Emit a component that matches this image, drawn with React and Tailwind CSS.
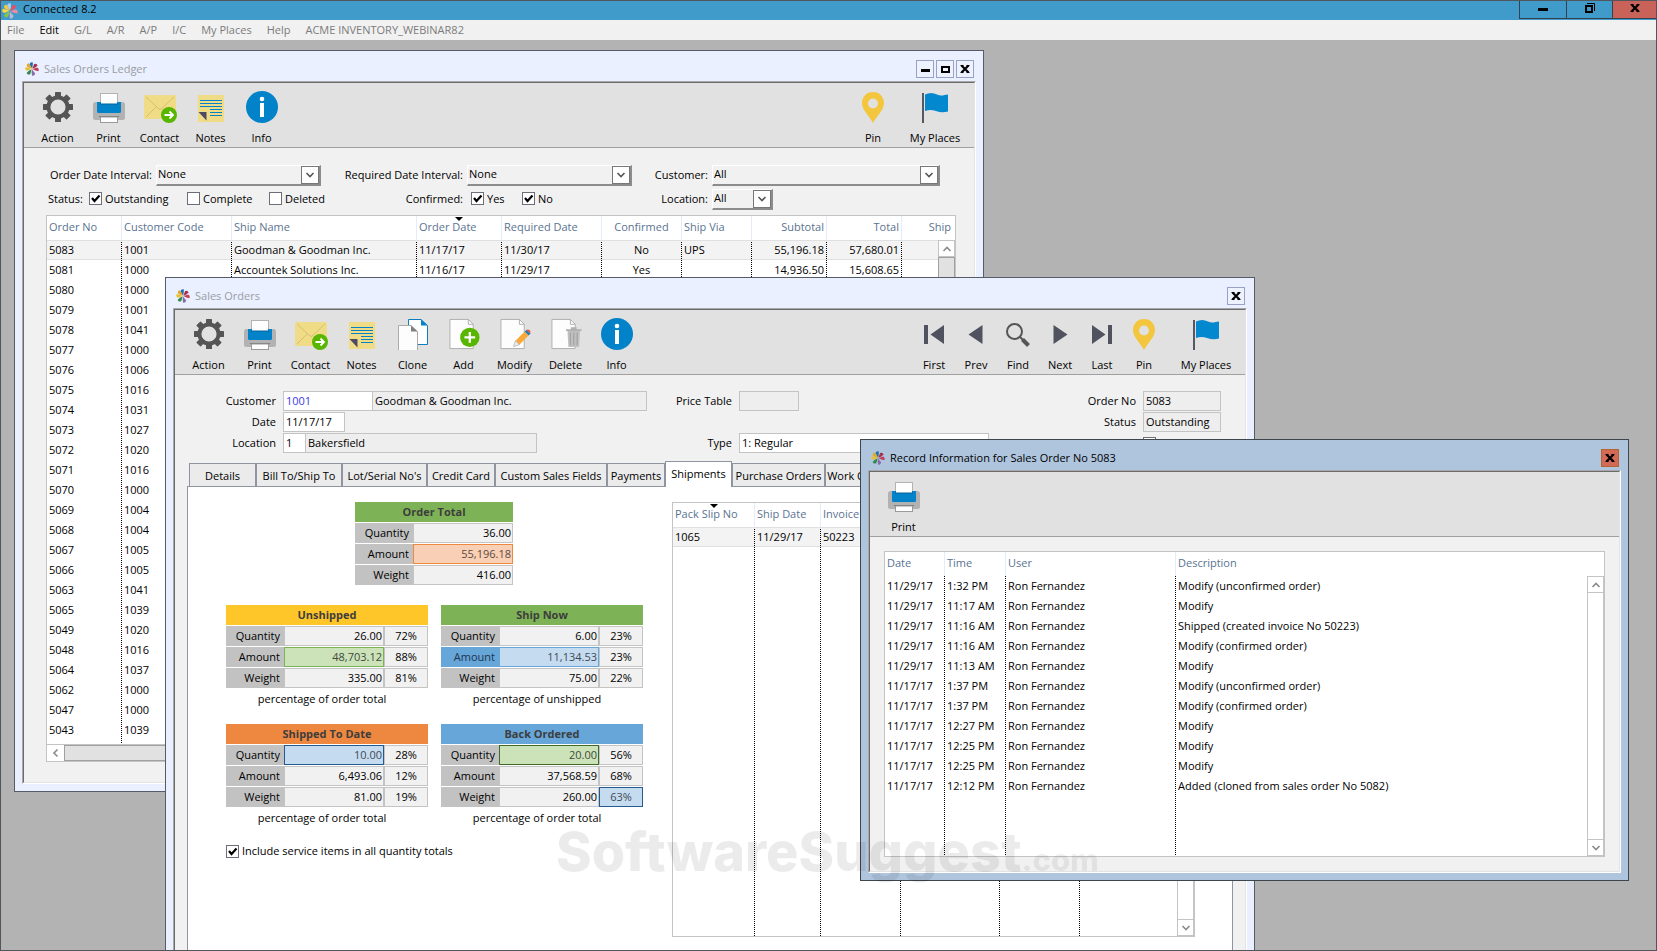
import React from 'react';

const ledgerColumns = [
  { key: 'no', label: 'Order No', width: 'w-[74px]' },
  { key: 'code', label: 'Customer Code', width: 'w-[110px]' },
  { key: 'name', label: 'Ship Name', width: 'w-[185px]' },
  { key: 'date', label: 'Order Date', width: 'w-[85px]', sorted: true },
  { key: 'required', label: 'Required Date', width: 'w-[100px]' },
  { key: 'confirmed', label: 'Confirmed', width: 'w-[80px]', align: 'text-center' },
  { key: 'via', label: 'Ship Via', width: 'w-[70px]' },
  { key: 'subtotal', label: 'Subtotal', width: 'w-[75px]', align: 'text-right' },
  { key: 'total', label: 'Total', width: 'w-[75px]', align: 'text-right' },
  { key: 'ship', label: 'Ship', width: '', align: 'text-right' },
];

const ledgerRows = [
  { no: '5083', code: '1001', name: 'Goodman & Goodman Inc.', date: '11/17/17', required: '11/30/17', confirmed: 'No', via: 'UPS', subtotal: '55,196.18', total: '57,680.01' },
  { no: '5081', code: '1000', name: 'Accountek Solutions Inc.', date: '11/16/17', required: '11/29/17', confirmed: 'Yes', subtotal: '14,936.50', total: '15,608.65' },
  { no: '5080', code: '1000' },
  { no: '5079', code: '1001' },
  { no: '5078', code: '1041' },
  { no: '5077', code: '1000' },
  { no: '5076', code: '1006' },
  { no: '5075', code: '1016' },
  { no: '5074', code: '1031' },
  { no: '5073', code: '1027' },
  { no: '5072', code: '1020' },
  { no: '5071', code: '1016' },
  { no: '5070', code: '1000' },
  { no: '5069', code: '1004' },
  { no: '5068', code: '1004' },
  { no: '5067', code: '1005' },
  { no: '5066', code: '1005' },
  { no: '5063', code: '1041' },
  { no: '5065', code: '1039' },
  { no: '5049', code: '1020' },
  { no: '5048', code: '1016' },
  { no: '5064', code: '1037' },
  { no: '5062', code: '1000' },
  { no: '5047', code: '1000' },
  { no: '5043', code: '1039' },
];

const shipmentColumns = [
  { key: 'slip', label: 'Pack Slip No', width: 'w-[81px]', sorted: true },
  { key: 'date', label: 'Ship Date', width: 'w-[66px]' },
  { key: 'invoice', label: 'Invoice', width: 'w-[80px]' },
  { key: 'c4', label: '', width: 'w-[99px]' },
  { key: 'c5', label: '', width: 'w-[80px]' },
  { key: 'c6', label: '', width: '' },
];

const shipmentRows = [{ slip: '1065', date: '11/29/17', invoice: '50223' }];

const recordColumns = [
  { key: 'date', label: 'Date', width: 'w-[59px]' },
  { key: 'time', label: 'Time', width: 'w-[61px]' },
  { key: 'user', label: 'User', width: 'w-[170px]' },
  { key: 'text', label: 'Description', width: '' },
];

const recordRows = [
  ['11/29/17', '1:32 PM', 'Modify (unconfirmed order)'],
  ['11/29/17', '11:17 AM', 'Modify'],
  ['11/29/17', '11:16 AM', 'Shipped (created invoice No 50223)'],
  ['11/29/17', '11:16 AM', 'Modify (confirmed order)'],
  ['11/29/17', '11:13 AM', 'Modify'],
  ['11/17/17', '1:37 PM', 'Modify (unconfirmed order)'],
  ['11/17/17', '1:37 PM', 'Modify (confirmed order)'],
  ['11/17/17', '12:27 PM', 'Modify'],
  ['11/17/17', '12:25 PM', 'Modify'],
  ['11/17/17', '12:25 PM', 'Modify'],
  ['11/17/17', '12:12 PM', 'Added (cloned from sales order No 5082)'],
].map(([date, time, text]) => ({ date, time, user: 'Ron Fernandez', text }));

/* ---------- icons ---------- */

function Logo({ className = 'size-[14px]', light }) {
  const colors = light
    ? ['#a9d0f0', '#e8506a', '#f08aa0', '#b9b4dc', '#8cc63f', '#f6d94a', '#f3c63c']
    : ['#1f6fb5', '#a8304a', '#c2405a', '#8a6bb0', '#2f8a4a', '#e8c02f', '#e0a92a'];
  return (
    <svg viewBox="0 0 16 16" className={className} aria-hidden="true">
      {[-8, 44, 95, 165, 220, 272, 315].map((angle, i) => (
        <path key={angle} d="M8 7.500L5.800 2.200Q7.200-.6 9.800.6 10 4 8 7.500Z" fill={colors[i]} transform={`rotate(${angle} 8 8)`} />
      ))}
    </svg>
  );
}

function GearIcon() {
  return (
    <svg viewBox="0 0 32 32" className="size-8" aria-hidden="true">
      <g fill="#555">
        {[0, 45, 90, 135, 180, 225, 270, 315].map((a) => (
          <rect key={a} x="13" y="1" width="6" height="7" rx=".6" transform={`rotate(${a} 16 16)`} />
        ))}
      </g>
      <circle cx="16" cy="16" r="9.6" fill="none" stroke="#555" strokeWidth="4" />
    </svg>
  );
}

function PrintIcon() {
  return (
    <svg viewBox="0 0 32 32" className="size-8" aria-hidden="true">
      <rect x="0" y="11" width="32" height="18" rx="2.5" fill="#b2b2b2" />
      <rect x="7.5" y="2.5" width="17" height="12" fill="#fdfdfd" stroke="#b2b2b2" />
      <path d="M4 11h4v2h16v-2h4v9.500a1.500 1.500 0 0 1-1.500 1.500h-21a1.500 1.500 0 0 1-1.500-1.500z" fill="#0282c8" />
      <path d="M7 13h18" stroke="#046398" strokeWidth="1" />
      <path d="M6 25.500h20" stroke="#777" strokeWidth="1" />
      <rect x="7.500" y="26" width="17" height="5.500" fill="#fdfdfd" stroke="#999" />
    </svg>
  );
}

function ContactIcon() {
  return (
    <svg viewBox="0 0 34 32" className="h-8 w-[34px]" aria-hidden="true">
      <rect x="1" y="4" width="32" height="24" rx="1.500" fill="#f0dc86" />
      <path d="M3 6l13 12q1 1 2 0L31 6M3 26l10-10" fill="none" stroke="#d3c075" strokeWidth="1" />
      <circle cx="26" cy="24" r="8" fill="#58b500" />
      <path d="M21.500 24h8M26.500 20.500l3.500 3.500-3.500 3.500" fill="none" stroke="#fff" strokeWidth="1.800" />
    </svg>
  );
}

function NotesIcon() {
  return (
    <svg viewBox="0 0 32 32" className="size-8" aria-hidden="true">
      <path d="M3 4h26v27H3z" fill="#f0dc86" />
      <path d="M3.500 21h8v8.500z" fill="#4f4a63" />
      <path d="M5 9.500h22M5 12.500h22M5 15.500h22M15 18.500h12M15 21.500h12M15 24.500h12" stroke="#0282c8" strokeWidth="1" />
    </svg>
  );
}

function InfoIcon() {
  return (
    <svg viewBox="0 0 32 32" className="size-8" aria-hidden="true">
      <circle cx="16" cy="16" r="16" fill="#0282c8" />
      <circle cx="16" cy="8" r="2.300" fill="#fff" />
      <rect x="14" y="12" width="4" height="14" fill="#fff" />
    </svg>
  );
}

function CloneIcon() {
  return (
    <svg viewBox="0 0 32 32" className="size-8" aria-hidden="true">
      <path d="M11.500 1.500h12.500l6.500 6v19h-19z" fill="#fff" stroke="#0f7cc0" />
      <path d="M24 1.500v6h6.500z" fill="#0282c8" />
      <path d="M1.500 7.500h12.500l6.500 6v19h-19z" fill="#fdfdfd" stroke="#aaa" />
      <path d="M14 7.500v6h6.500z" fill="#808080" />
    </svg>
  );
}

function Sheet() {
  return (
    <>
      <path d="M2.500 1.500h19l5 5v25h-24z" fill="#fdfdfd" stroke="#b0b0b0" />
      <path d="M21.500 1.500v5h5z" fill="#fff" stroke="#b0b0b0" />
    </>
  );
}

function AddIcon() {
  return (
    <svg viewBox="0 0 34 33" className="h-8 w-[34px]" aria-hidden="true">
      <Sheet />
      <circle cx="23" cy="20" r="10" fill="#58b500" />
      <path d="M23 14.500v11M17.500 20h11" stroke="#fff" strokeWidth="2.400" />
    </svg>
  );
}

function ModifyIcon() {
  return (
    <svg viewBox="0 0 34 33" className="h-8 w-[34px]" aria-hidden="true">
      <Sheet />
      <path d="M27 14l4 4-9.500 9.500-4-4z" fill="#f9a93a" />
      <path d="M27 14l2-2 4 4-2 2z" fill="#1b7fc4" />
      <path d="M28.500 12.500q2-1.500 3.500 0t.800 3.500z" fill="#ee5a35" />
      <path d="M17.500 23.500l4 4-6 2z" fill="#eee" stroke="#999" strokeWidth=".6" />
    </svg>
  );
}

function DeleteIcon() {
  return (
    <svg viewBox="0 0 34 33" className="h-8 w-[34px]" aria-hidden="true">
      <Sheet />
      <path d="M18.500 13h13l-1 17h-11z" fill="#c0c0c0" />
      <path d="M17 12.500h16M22 10.500h6" stroke="#b0b0b0" strokeWidth="2" />
      <path d="M21.500 15v13M25 15v13M28.500 15v13" stroke="#a2a2a2" strokeWidth="1.200" />
    </svg>
  );
}

function PinIcon() {
  return (
    <svg viewBox="0 0 32 32" className="size-8" aria-hidden="true">
      <path fillRule="evenodd" d="M16 1C9.500 1 5 5.800 5 12c0 7 7 12.500 11 20 4-7.500 11-13 11-20C27 5.800 22.500 1 16 1zm0 6.500a5 5 0 1 1 0 10 5 5 0 0 1 0-10z" fill="#f4c63d" />
    </svg>
  );
}

function FlagIcon() {
  return (
    <svg viewBox="0 0 32 32" className="size-8" aria-hidden="true">
      <path d="M4 2v30" stroke="#555764" strokeWidth="2" />
      <path d="M6 3.500c4-2 8-2 12 0s7 .500 11 0v17c-4 1-8 1-12-.5s-7-1.500-11 0z" fill="#0288cf" />
    </svg>
  );
}

function FirstIcon() {
  return (
    <svg viewBox="0 0 32 32" className="size-8" aria-hidden="true">
      <path d="M6 7h4v19H6zM26 7v19L12.500 16.500z" fill="#50535f" />
    </svg>
  );
}
function PrevIcon() {
  return (
    <svg viewBox="0 0 32 32" className="size-8" aria-hidden="true">
      <path d="M22.500 7v19L8.500 16.500z" fill="#50535f" />
    </svg>
  );
}
function NextIcon() {
  return (
    <svg viewBox="0 0 32 32" className="size-8" aria-hidden="true">
      <path d="M9.500 7v19l14-9.500z" fill="#50535f" />
    </svg>
  );
}
function LastIcon() {
  return (
    <svg viewBox="0 0 32 32" className="size-8" aria-hidden="true">
      <path d="M22 7h4v19h-4zM6 7v19l13.500-9.500z" fill="#50535f" />
    </svg>
  );
}
function FindIcon() {
  return (
    <svg viewBox="0 0 32 32" className="size-8" aria-hidden="true">
      <circle cx="12.500" cy="13.500" r="7.500" fill="none" stroke="#555" strokeWidth="2" />
      <path d="M18 19l3 3" stroke="#555" strokeWidth="2" />
      <path d="M20.500 21.500l6 6" stroke="#555" strokeWidth="4" />
    </svg>
  );
}

function Chevron({ dir = 'down', className = 'text-[#8a8a90]' }) {
  const paths = { down: 'M1.500 3l3.500 3.500L8.500 3', up: 'M1.500 7L5 3.500 8.500 7', left: 'M6.500 1.500L3 5l3.500 3.500' };
  return (
    <svg viewBox="0 0 10 10" className={`size-[10px] ${className}`} aria-hidden="true">
      <path d={paths[dir]} fill="none" stroke="currentColor" strokeWidth="1.600" />
    </svg>
  );
}

/* ---------- window pieces ---------- */

function CloseGlyph() {
  return (
    <svg viewBox="0 0 10 10" className="size-[10px]" aria-hidden="true">
      <path d="M1.500 1.500l7 7M8.500 1.500l-7 7" stroke="#000" strokeWidth="2.200" />
      <path d="M.5 1.500h3M6.500 1.500h3M.5 8.500h3M6.500 8.500h3" stroke="#000" strokeWidth="1" />
    </svg>
  );
}

const frameButton = 'flex size-[18px] items-center justify-center border border-[#98a2c4] bg-[#eef2ff]';

function Win({ title, active, sizable, className, children }) {
  return (
    <section
      aria-label={title}
      className={`absolute isolate flex flex-col border ${active ? 'border-[#3f454d] bg-[#afc5de]' : 'border-[#555c66] bg-[#eaf0ff]'} ${className}`}
    >
      <header className="flex h-[30px] shrink-0 items-center gap-[5px] pl-[10px] pr-[9px] pt-[6px]">
        <Logo />
        <h2 className={active ? 'text-black' : 'text-[#9a9ca3]'}>{title}</h2>
        <div className="ml-auto flex gap-[2px]">
          {sizable && (
            <>
              <button aria-label="Minimize" className={frameButton}>
                <span className="mt-[3px] h-[3px] w-[9px] bg-black" />
              </button>
              <button aria-label="Maximize" className={frameButton}>
                <span className="h-[7px] w-[9px] border-2 border-black" />
              </button>
            </>
          )}
          <button
            aria-label="Close"
            className={active ? 'flex size-[18px] items-center justify-center border border-[#b5632f] bg-[#d36a56]' : frameButton}
          >
            <CloseGlyph />
          </button>
        </div>
      </header>
      <div className="mx-[7px] mb-[7px] flex min-h-0 flex-1 flex-col border border-b-white border-l-[#a8a8a8] border-r-white border-t-[#a8a8a8]">
        <div className="flex min-h-0 flex-1 flex-col border border-b-[#e3e3e3] border-l-[#6b6b6b] border-r-[#e3e3e3] border-t-[#6b6b6b] bg-[#f1f1f1]">
          {children}
        </div>
      </div>
    </section>
  );
}

function Toolbar({ children }) {
  return (
    <div className="flex h-[65px] shrink-0 border-b border-[#a0a0a0] bg-[#e1e1e1] pl-[8px] pr-[2px] pt-2">
      {children}
    </div>
  );
}

function Tool({ icon, label, className = 'w-[51px]' }) {
  return (
    <button className={`flex flex-col items-center gap-[7px] whitespace-nowrap ${className}`}>
      {icon}
      {label}
    </button>
  );
}

function PlacesTools() {
  return (
    <>
      <Tool icon={<PinIcon />} label="Pin" className="w-[42px]" />
      <Tool icon={<FlagIcon />} label="My Places" className="ml-1 w-[74px]" />
    </>
  );
}

function Check({ label, checked, className = '' }) {
  return (
    <label className={`flex items-center gap-[3px] whitespace-nowrap ${className}`}>
      <span className="relative size-[13px]">
        <input type="checkbox" defaultChecked={checked} className="peer block size-[13px] appearance-none border border-[#6e6e78] bg-white" />
        <svg viewBox="0 0 13 13" className="pointer-events-none absolute inset-0 hidden size-[13px] peer-checked:block" aria-hidden="true">
          <path d="M3 6l2.500 3L10.500 3.500" fill="none" stroke="#000" strokeWidth="2.200" />
        </svg>
      </span>
      {label}
    </label>
  );
}

function Picker({ id, label, value, labelClass, selectClass }) {
  return (
    <>
      <label htmlFor={id} className={`whitespace-nowrap pb-[2px] pr-1 text-right ${labelClass}`}>{label}</label>
      <div className={`relative h-[21px] border-b-2 border-l border-r-2 border-t border-b-[#8c8c8c] border-l-white border-r-[#8c8c8c] border-t-white ${selectClass}`}>
        <select id={id} className="block h-full w-full appearance-none bg-[#f1f1f1] pb-[2px] pl-px">
          <option>{value}</option>
        </select>
        <span className="pointer-events-none absolute inset-y-0 right-0 flex w-[18px] items-center justify-center border border-[#777] bg-white">
          <Chevron className="text-[#555]" />
        </span>
      </div>
    </>
  );
}

const scrollButton = 'flex size-[17px] shrink-0 items-center justify-center border border-[#c4c4c4] bg-white';

function ScrollBar({ thumb }) {
  return (
    <div className="absolute bottom-0 right-0 top-[24px] flex w-[17px] flex-col border-x border-[#c4c4c4] bg-white">
      <button aria-label="Scroll up" className={`-mx-px ${scrollButton}`}><Chevron dir="up" /></button>
      <div className="flex flex-1 flex-col">
        {thumb && <div className="-mx-px h-[200px] border border-[#a0a0a0] bg-[#e1e1e1]" />}
      </div>
      <button aria-label="Scroll down" className={`-mx-px ${scrollButton}`}><Chevron /></button>
    </div>
  );
}

// one black pixel on, one off, down the left edge of a cell
const dotted = 'bg-[linear-gradient(#000_50%,transparent_50%)] bg-[length:1px_2px] bg-left-top bg-repeat-y';

function Grid({ columns, rows, selected, filler }) {
  return (
    <table className="w-full table-fixed border-separate border-spacing-0">
      <thead>
        <tr className="h-[24px]">
          {columns.map((col, i) => (
            <th
              key={col.key}
              scope="col"
              className={`relative whitespace-nowrap p-0 pb-[3px] font-normal text-[#5a7391] ${i ? 'border-l border-[#e3ecf8]' : ''} ${col.key === 'ship' ? 'pr-[4px]' : 'px-[2px]'} ${col.align || 'text-left'} ${col.width}`}
            >
              {col.label}
              {col.sorted && (
                <svg viewBox="0 0 8 4" className="absolute inset-x-0 top-px mx-auto h-1 w-2" aria-hidden="true">
                  <path d="M0 0h8L4 4z" />
                </svg>
              )}
            </th>
          ))}
        </tr>
      </thead>
      <tbody>
        {rows.map((row, r) => (
          <tr key={r} className="h-[20px]">
            {columns.map((col, i) => (
              <td
                key={col.key}
                className={`whitespace-nowrap p-0 pr-[2px] ${i ? `pl-[3px] ${dotted}` : 'pl-[2px]'} ${col.align || ''} ${r === selected ? 'bg-[#f3f3f3] shadow-[inset_0_1px_#e0e0e0,inset_0_-1px_#e0e0e0]' : ''}`}
              >
                {row[col.key]}
              </td>
            ))}
          </tr>
        ))}
        {filler && (
          <tr className={filler} aria-hidden="true">
            {columns.map((col, i) => (
              <td key={col.key} className={i ? `p-0 ${dotted}` : 'p-0'} />
            ))}
          </tr>
        )}
      </tbody>
    </table>
  );
}

/* ---------- Sales Orders Ledger ---------- */

function LedgerWindow() {
  return (
    <Win title="Sales Orders Ledger" sizable className="left-[13px] top-[10px] h-[742px] w-[970px]">
      <Toolbar>
        <Tool icon={<GearIcon />} label="Action" />
        <Tool icon={<PrintIcon />} label="Print" />
        <Tool icon={<ContactIcon />} label="Contact" />
        <Tool icon={<NotesIcon />} label="Notes" />
        <Tool icon={<InfoIcon />} label="Info" />
        <div className="ml-auto flex"><PlacesTools /></div>
      </Toolbar>

      <div className="flex flex-col gap-[3px] pl-6 pt-[17px]">
        <div className="flex items-center">
          <Picker id="order-interval" label="Order Date Interval:" value="None" labelClass="w-[108px]" selectClass="w-[165px]" />
          <Picker id="required-interval" label="Required Date Interval:" value="None" labelClass="w-[146px]" selectClass="w-[165px]" />
          <Picker id="customer-filter" label="Customer:" value="All" labelClass="w-[80px]" selectClass="w-[228px]" />
        </div>
        <div className="flex items-center">
          <div className="flex pb-[2px]">
            <span className="w-[41px]">Status:</span>
            <Check label="Outstanding" checked className="w-[98px]" />
            <Check label="Complete" className="w-[82px]" />
            <Check label="Deleted" className="w-[82px]" />
            <span className="w-[120px] pr-[8px] text-right">Confirmed:</span>
            <Check label="Yes" checked className="w-[51px]" />
            <Check label="No" checked className="w-[51px]" />
          </div>
          <Picker id="location-filter" label="Location:" value="All" labelClass="w-[139px]" selectClass="w-[61px]" />
        </div>
      </div>

      <div className="ml-[22px] mr-[18px] mt-[5px] flex flex-col">
        <div className="relative h-[530px] border border-[#c4c4c4] bg-white">
          <Grid columns={ledgerColumns} rows={ledgerRows} selected={0} filler="h-[4px]" />
          <ScrollBar thumb />
        </div>
        <div className="flex h-[17px] border border-t-0 border-[#c4c4c4] bg-white">
          <button aria-label="Scroll left" className="flex w-[17px] items-center justify-center"><Chevron dir="left" /></button>
          <div className="w-[600px] border border-[#a0a0a0] bg-[#e1e1e1]" />
        </div>
      </div>
    </Win>
  );
}

/* ---------- Sales Orders ---------- */

const fieldBase = 'h-[20px] border border-[#c4c4c4] pb-[2px] pl-[2px]';

function Field({ label, value, labelClass, inputClass, extra }) {
  const id = `so-${label.toLowerCase().replace(/\s/g, '-')}`;
  return (
    <div className="flex items-center">
      <label htmlFor={id} className={`pr-[7px] text-right ${labelClass}`}>{label}</label>
      <input id={id} defaultValue={value} className={`${fieldBase} ${inputClass}`} />
      {extra}
    </div>
  );
}

const tones = {
  plain: 'border-[#c4c4c4] bg-[#f1f1f1] text-black',
  orange: 'border-[#ee8840] bg-[#f9d0b5] text-[#5c4a40]',
  green: 'border-[#7db356] bg-[#cce3ba] text-[#3f4a3a]',
  darkGreen: 'border-[#3f6b2a] bg-[#cce3ba] text-[#3f4a3a]',
  blue: 'border-[#66a6d8] bg-[#c5dcf0] text-[#3f4a55]',
  darkBlue: 'border-[#255a8e] bg-[#c5dcf0] text-[#3f4a55]',
};

function Totals({ title, head, rows, note }) {
  return (
    <div>
      <table className="border-separate border-spacing-0">
        <thead>
          <tr>
            <th colSpan={3} className={`h-[20px] p-0 font-bold text-[#3d3d3d] ${head}`}>{title}</th>
          </tr>
        </thead>
        <tbody>
          {rows.map(([label, value, pct, tone = 'plain', pctTone = 'plain', labelTone = 'bg-[#c2c2c2]']) => (
            <tr key={label}>
              <th scope="row" className="p-0 pt-px font-normal">
                <div className={`h-[20px] w-[58px] pr-1 text-right leading-[20px] ${labelTone}`}>{label}</div>
              </th>
              <td className="p-0 pt-px">
                <div className={`h-[20px] w-[100px] border pr-px text-right leading-[18px] ${tones[tone]}`}>{value}</div>
              </td>
              {pct && (
                <td className="p-0 pt-px">
                  <div className={`h-[20px] w-[44px] border text-center leading-[18px] ${tones[pctTone]}`}>{pct}</div>
                </td>
              )}
            </tr>
          ))}
        </tbody>
      </table>
      {note && <p className="w-[192px] text-center leading-[22px]">{note}</p>}
    </div>
  );
}

const tabs = [
  ['Details', 'w-[67px]'],
  ['Bill To/Ship To', 'w-[86px]'],
  ["Lot/Serial No's", 'w-[85px]'],
  ['Credit Card', 'w-[68px]'],
  ['Custom Sales Fields', 'w-[112px]'],
  ['Payments', 'w-[58px]'],
  ['Shipments', 'w-[67px]'],
  ['Purchase Orders', 'w-[93px]'],
  ['Work Orders', 'w-[70px]'],
];

function OrderWindow() {
  return (
    <Win title="Sales Orders" className="left-[164px] top-[237px] h-[700px] w-[1090px]">
      <Toolbar>
        <Tool icon={<GearIcon />} label="Action" />
        <Tool icon={<PrintIcon />} label="Print" />
        <Tool icon={<ContactIcon />} label="Contact" />
        <Tool icon={<NotesIcon />} label="Notes" />
        <Tool icon={<CloneIcon />} label="Clone" />
        <Tool icon={<AddIcon />} label="Add" />
        <Tool icon={<ModifyIcon />} label="Modify" />
        <Tool icon={<DeleteIcon />} label="Delete" />
        <Tool icon={<InfoIcon />} label="Info" />
        <div className="ml-auto flex">
          <Tool icon={<FirstIcon />} label="First" className="w-[42px]" />
          <Tool icon={<PrevIcon />} label="Prev" className="w-[42px]" />
          <Tool icon={<FindIcon />} label="Find" className="w-[42px]" />
          <Tool icon={<NextIcon />} label="Next" className="w-[42px]" />
          <Tool icon={<LastIcon />} label="Last" className="w-[42px]" />
          <PlacesTools />
        </div>
      </Toolbar>

      <div className="flex pr-6 pt-4">
        <div className="flex w-[472px] flex-col gap-px">
          <Field
            label="Customer"
            value="1001"
            labelClass="w-[108px]"
            inputClass="w-[90px] bg-white text-[#3a3ae8]"
            extra={<input aria-label="Customer name" defaultValue="Goodman & Goodman Inc." className={`${fieldBase} -ml-px w-[275px] bg-[#eee]`} />}
          />
          <Field label="Date" value="11/17/17" labelClass="w-[108px]" inputClass="w-[62px] bg-white" />
          <Field
            label="Location"
            value="1"
            labelClass="w-[108px]"
            inputClass="w-[23px] bg-white"
            extra={<input aria-label="Location name" defaultValue="Bakersfield" className={`${fieldBase} -ml-px w-[232px] bg-[#eee]`} />}
          />
        </div>
        <div className="flex flex-col justify-between">
          <Field label="Price Table" value="" labelClass="w-[92px]" inputClass="w-[60px] bg-[#eee]" />
          <Field label="Type" value="1: Regular" labelClass="w-[92px]" inputClass="w-[250px] bg-white" />
        </div>
        <div className="ml-auto flex flex-col gap-px">
          <Field label="Order No" value="5083" labelClass="w-[100px]" inputClass="w-[78px] bg-[#eee]" />
          <Field label="Status" value="Outstanding" labelClass="w-[100px]" inputClass="w-[78px] bg-[#eee]" />
          <Check label="Confirmed" className="ml-[100px] h-[20px]" />
        </div>
      </div>

      <div role="tablist" className="relative z-10 -mb-px ml-[14px] mt-2 flex h-[26px] items-end">
        {tabs.map(([name, width]) => {
          const on = name === 'Shipments';
          return (
            <button
              key={name}
              role="tab"
              aria-selected={on}
              className={`overflow-hidden whitespace-nowrap border-[#9094a0] ${width} ${on ? 'h-[26px] border-x border-t bg-white pb-px' : 'h-[24px] border bg-[#ebebeb] pt-[2px]'}`}
            >
              {name}
            </button>
          );
        })}
      </div>

      <div className="ml-3 mr-3 flex flex-1 border border-b-0 border-[#9094a0] bg-white pt-[15px]">
        <div className="w-[484px] pl-[38px]">
          <div className="ml-[129px]">
            <Totals
              title="Order Total"
              head="bg-[#7db356]"
              rows={[['Quantity', '36.00'], ['Amount', '55,196.18', null, 'orange'], ['Weight', '416.00']]}
            />
          </div>
          <div className="mt-5 grid grid-cols-[202px_202px] gap-x-[13px] gap-y-[14px]">
            <Totals
              title="Unshipped"
              head="bg-[#fec629]"
              note="percentage of order total"
              rows={[['Quantity', '26.00', '72%'], ['Amount', '48,703.12', '88%', 'green'], ['Weight', '335.00', '81%']]}
            />
            <Totals
              title="Ship Now"
              head="bg-[#7db356]"
              note="percentage of unshipped"
              rows={[['Quantity', '6.00', '23%'], ['Amount', '11,134.53', '23%', 'blue', 'plain', 'bg-[#66a6d8] text-[#1f3550]'], ['Weight', '75.00', '22%']]}
            />
            <Totals
              title="Shipped To Date"
              head="bg-[#ee8840]"
              note="percentage of order total"
              rows={[['Quantity', '10.00', '28%', 'darkBlue'], ['Amount', '6,493.06', '12%'], ['Weight', '81.00', '19%']]}
            />
            <Totals
              title="Back Ordered"
              head="bg-[#66a6d8]"
              note="percentage of order total"
              rows={[['Quantity', '20.00', '56%', 'darkGreen'], ['Amount', '37,568.59', '68%'], ['Weight', '260.00', '63%', 'plain', 'darkBlue']]}
            />
          </div>
          <Check label="Include service items in all quantity totals" checked className="mt-[14px]" />
        </div>
        <div className="relative h-[435px] w-[523px] overflow-hidden border border-[#c4c4c4]">
          <Grid columns={shipmentColumns} rows={shipmentRows} selected={0} filler="h-[389px]" />
          <ScrollBar />
        </div>
      </div>
    </Win>
  );
}

/* ---------- Record Information ---------- */

function RecordWindow() {
  return (
    <Win title="Record Information for Sales Order No 5083" active className="left-[859px] top-[399px] h-[442px] w-[769px]">
      <Toolbar>
        <Tool icon={<PrintIcon />} label="Print" />
      </Toolbar>
      <div className="relative m-[14px] flex-1 overflow-hidden border border-[#c4c4c4] bg-white">
        <Grid columns={recordColumns} rows={recordRows} filler="h-[60px]" />
        <ScrollBar />
      </div>
    </Win>
  );
}

export default function App() {
  return (
    <div className="flex h-screen flex-col overflow-hidden border border-[#50565c] bg-[#b3b3b3] font-['Open_Sans','Noto_Sans',sans-serif] text-[11px] leading-4 text-black">
      <header className="flex h-[19px] shrink-0 items-center bg-[#419bca] pl-px">
        <Logo light className="size-[16px]" />
        <h1 className="ml-[5px] pb-[3px]">Connected 8.2</h1>
        <div className="ml-auto flex h-[18px] self-start border-b border-[#35424e]">
          <button aria-label="Minimize" className="flex w-[47px] items-center justify-center border-l border-[#35424e]">
            <span className="h-[3px] w-[10px] bg-black" />
          </button>
          <button aria-label="Restore" className="flex w-[46px] items-center justify-center border-l border-[#35424e]">
            <svg viewBox="0 0 10 10" className="mb-1 size-[10px]" aria-hidden="true">
              <path d="M1 3h6v6H1z" fill="none" stroke="#000" strokeWidth="2" />
              <path d="M2 .5h7.500V8" fill="none" stroke="#000" />
            </svg>
          </button>
          <button aria-label="Close" className="flex w-[44px] items-center justify-center border-l border-[#35424e] bg-[#c9635a] pb-1">
            <CloseGlyph />
          </button>
        </div>
      </header>

      <nav className="flex h-[20px] shrink-0 items-center gap-[15px] bg-[#f1f1f1] pl-[6px] text-[#7b7b7b]">
        {['File', 'Edit', 'G/L', 'A/R', 'A/P', 'I/C', 'My Places', 'Help', 'ACME INVENTORY_WEBINAR82'].map((item) => (
          <button key={item} className={item === 'Edit' ? 'text-black' : ''}>{item}</button>
        ))}
      </nav>

      <main className="relative flex-1 overflow-hidden">
        <LedgerWindow />
        <OrderWindow />
        <RecordWindow />
        <div className="pointer-events-none absolute left-[555px] top-[790px] flex items-baseline whitespace-nowrap font-['Inter',sans-serif] text-[54px] font-extrabold leading-[44px] text-black/8">
          SoftwareSuggest<span className="text-[31px]">.com</span>
        </div>
      </main>
    </div>
  );
}
